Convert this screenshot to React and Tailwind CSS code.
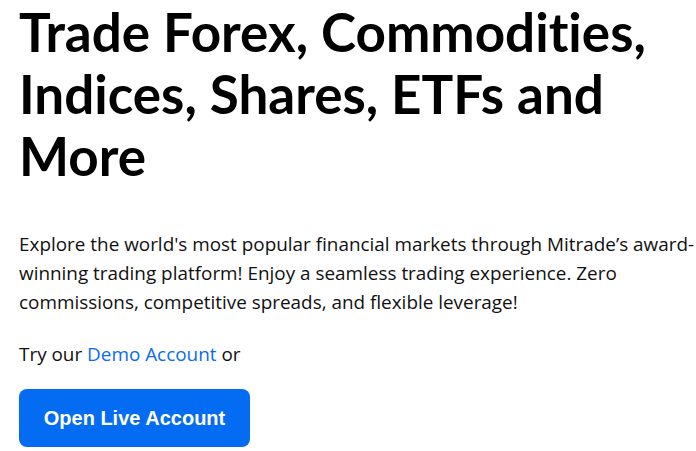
import React from "react";

const App = () => {
  return (
    <div className="w-[696px] h-[451px] overflow-hidden bg-white">
      <div className="pl-[19px] pt-[1px] font-['Open_Sans',sans-serif] text-black">
        <h1 className="text-[53px] leading-[62px] font-bold font-['Lato',sans-serif] [font-variant-ligatures:none]">
          Trade Forex, Commodities, Indices, Shares, ETFs and More
        </h1>
        <p className="mt-[43px] text-[18.9px] leading-[29px] text-[#111]">
          Explore the world's most popular financial markets through Mitrade’s
          award-winning trading platform! Enjoy a seamless trading experience.
          Zero commissions, competitive spreads, and flexible leverage!
        </p>
        <p className="mt-[23px] text-[18.9px] leading-[29px] text-[#111]">
          Try our{" "}
          <a href="#" className="text-[#0a6cf0]">
            Demo Account
          </a>{" "}
          or
        </p>
        <button
          type="button"
          className="mt-[20px] w-[231px] h-[58px] rounded-lg bg-[#046cf2] text-white text-[20px] font-bold font-['Liberation_Sans',sans-serif]"
        >
          Open Live Account
        </button>
      </div>
    </div>
  );
};

export default App;
